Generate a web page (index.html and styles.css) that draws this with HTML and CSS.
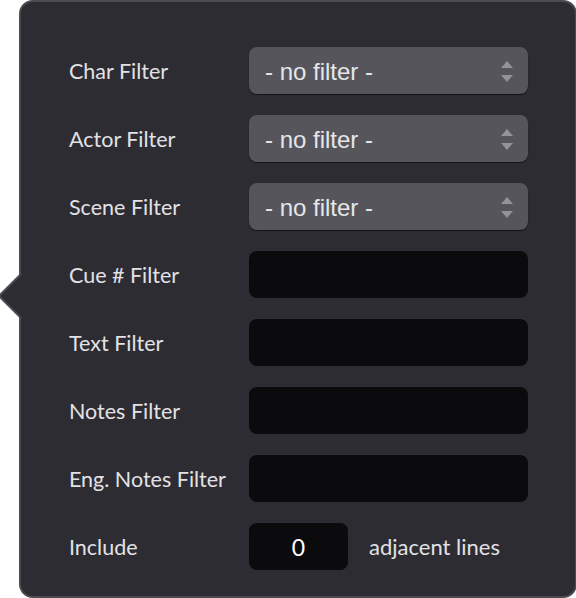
FILE: index.html
```html
<!DOCTYPE html>
<html lang="en">

<head>
    <meta charset="UTF-8">
    <title>Filters</title>
    <link rel="stylesheet" href="styles.css">
</head>

<body>
    <div class="popover">
        <svg class="pointer" width="24" height="44" viewBox="0 0 24 44">
            <polygon points="23,0 2,21 2,23 23,44" fill="#2d2c32" stroke="#4b4a50" stroke-width="2"/>
            <rect x="22" y="1" width="3" height="42" fill="#2d2c32"/>
        </svg>

        <div class="filters">
            <label>Char Filter</label>
            <div class="select"><span>- no filter -</span><svg class="updown" width="12" height="22" viewBox="0 0 12 22"><polygon points="6,0 12,7 0,7" /><polygon points="0,14 12,14 6,21" /></svg></div>

            <label>Actor Filter</label>
            <div class="select"><span>- no filter -</span><svg class="updown" width="12" height="22" viewBox="0 0 12 22"><polygon points="6,0 12,7 0,7" /><polygon points="0,14 12,14 6,21" /></svg></div>

            <label>Scene Filter</label>
            <div class="select"><span>- no filter -</span><svg class="updown" width="12" height="22" viewBox="0 0 12 22"><polygon points="6,0 12,7 0,7" /><polygon points="0,14 12,14 6,21" /></svg></div>

            <label>Cue # Filter</label>
            <div class="field"></div>

            <label>Text Filter</label>
            <div class="field"></div>

            <label>Notes Filter</label>
            <div class="field"></div>

            <label>Eng. Notes Filter</label>
            <div class="field"></div>

            <label>Include</label>
            <div class="include">
                <div class="field small">0</div>
                <span>adjacent lines</span>
            </div>
        </div>
    </div>
</body>

</html>
```

FILE: styles.css
```css
body {
    margin: 0;
    background: #ffffff;
    font-family: 'Lato', sans-serif;
}

.popover {
    position: relative;
    margin-left: 19px;
    width: 558px;
    height: 598px;
    box-sizing: border-box;
    background-color: #2d2c32;
    border: 2px solid #4b4a50;
    border-radius: 14px;
}

.pointer {
    position: absolute;
    left: -23px;
    top: 272px;
}

.filters {
    display: grid;
    grid-template-columns: 180px 279px;
    grid-auto-rows: 47px;
    row-gap: 21px;
    padding: 45px 0 0 48px;
}

.filters label {
    display: flex;
    align-items: center;
    color: #e2e2e6;
    font-size: 21.5px;
}

.select {
    display: flex;
    align-items: center;
    justify-content: space-between;
    padding: 2px 15px 0 16px;
    background-color: #55555b;
    border-radius: 8px;
    box-shadow: 0 1px 1px rgba(0, 0, 0, 0.6);
    color: #e6e6ea;
    font-family: 'Liberation Sans', Arial, sans-serif;
    font-size: 24px;
}

.updown {
    fill: #939398;
}

.field {
    background-color: #0b0b0d;
    border-radius: 8px;
}

.include {
    display: flex;
    align-items: center;
    gap: 21px;
    color: #e2e2e6;
    font-size: 22px;
}

.field.small {
    width: 99px;
    height: 47px;
    display: flex;
    align-items: center;
    justify-content: center;
    color: #ffffff;
    font-size: 23px;
}
```
